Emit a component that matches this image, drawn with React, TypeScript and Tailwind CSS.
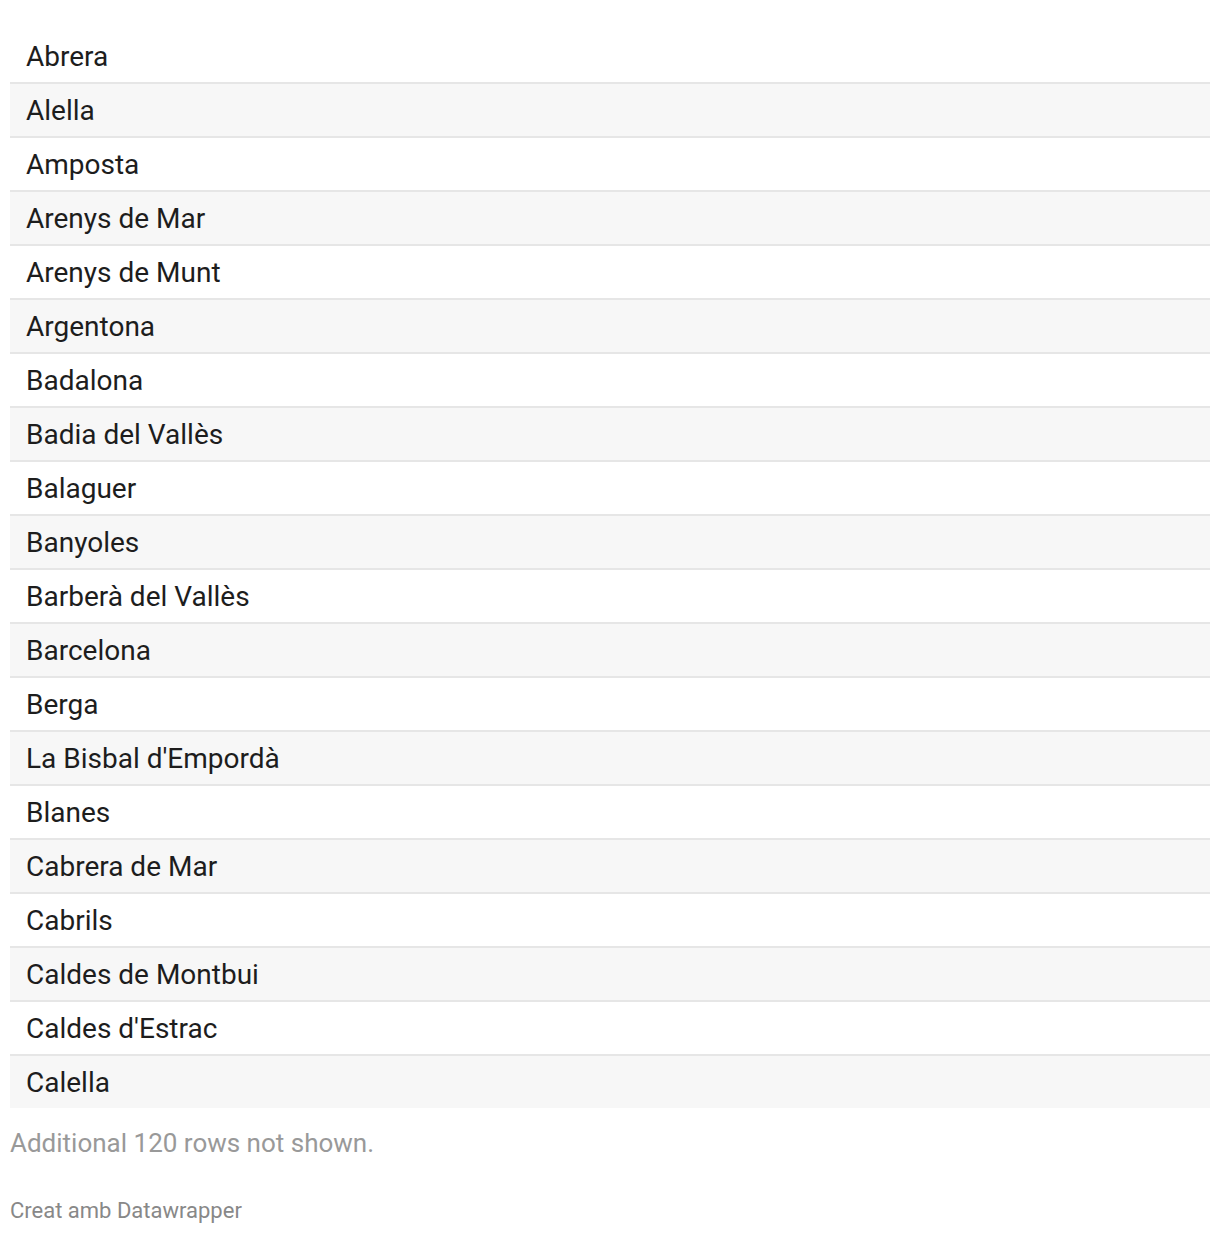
import React from 'react'

const towns = [
    'Abrera',
    'Alella',
    'Amposta',
    'Arenys de Mar',
    'Arenys de Munt',
    'Argentona',
    'Badalona',
    'Badia del Vallès',
    'Balaguer',
    'Banyoles',
    'Barberà del Vallès',
    'Barcelona',
    'Berga',
    "La Bisbal d'Empordà",
    'Blanes',
    'Cabrera de Mar',
    'Cabrils',
    'Caldes de Montbui',
    "Caldes d'Estrac",
    'Calella',
]

const App = () => {
    return (
        <div className="min-h-screen bg-white px-[10px] pt-[30px] font-['Roboto',sans-serif]">
            <div className="flex flex-col">
                {towns.map((town, i) => (
                    <div
                        key={town}
                        className={
                            (i % 2 === 1 ? 'bg-[#f7f7f7] ' : 'bg-white ') +
                            (i < towns.length - 1 ? 'border-b-2 border-[#e6e6e6] ' : '') +
                            'h-[50px] pt-[2px] box-content flex items-center pl-[16px] text-[28px] text-[#1d1d1d]'
                        }
                    >
                        {town}
                    </div>
                ))}
            </div>
            <p className="mt-[20px] text-[26px] leading-[30px] text-[#999999]">Additional 120 rows not shown.</p>
            <p className="mt-[41px] text-[22px] leading-[24px] text-[#888888]">Creat amb Datawrapper</p>
        </div>
    )
}

export default App
